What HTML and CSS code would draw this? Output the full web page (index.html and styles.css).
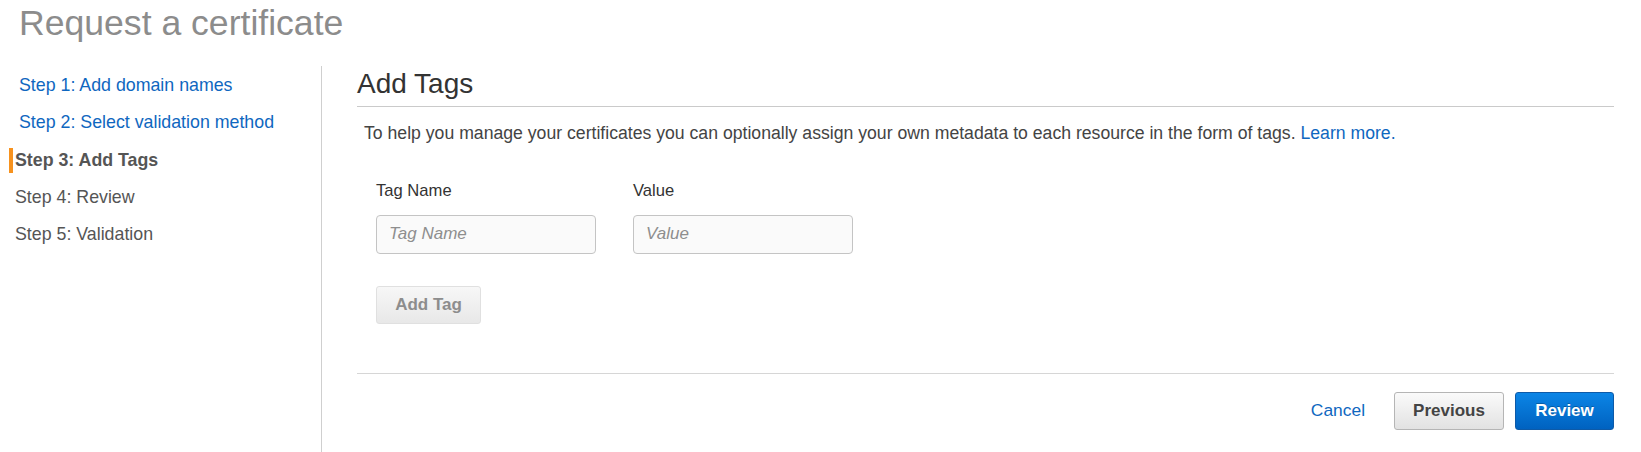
FILE: index.html
```html
<!DOCTYPE html>
<html lang="en">
<head>
<meta charset="utf-8">
<title>Request a certificate</title>
<link rel="stylesheet" href="styles.css">
</head>
<body>
<div class="page">
  <h1 class="page-title">Request a certificate</h1>
  <div class="layout">
    <nav class="steps">
      <a class="step step-link" href="#">Step 1: Add domain names</a>
      <a class="step step-link" href="#">Step 2: Select validation method</a>
      <div class="step step-active">Step 3: Add Tags</div>
      <div class="step">Step 4: Review</div>
      <div class="step">Step 5: Validation</div>
    </nav>
    <main class="content">
      <h2 class="section-title">Add Tags</h2>
      <p class="desc">To help you manage your certificates you can optionally assign your own metadata to each resource in the form of tags. <a class="link" href="#">Learn more.</a></p>
      <div class="fields">
        <div class="field">
          <label class="field-label">Tag Name</label>
          <input class="input" type="text" placeholder="Tag Name">
        </div>
        <div class="field">
          <label class="field-label">Value</label>
          <input class="input" type="text" placeholder="Value">
        </div>
      </div>
      <button class="btn btn-disabled" type="button">Add Tag</button>
      <div class="footer">
        <a class="link cancel" href="#">Cancel</a>
        <button class="btn btn-secondary" type="button">Previous</button>
        <button class="btn btn-primary" type="button">Review</button>
      </div>
    </main>
  </div>
</div>
</body>
</html>
```
FILE: styles.css
```css
* { box-sizing: border-box; }
html, body { margin: 0; padding: 0; background: #fff; }
body {
  font-family: "Liberation Sans", Arial, Helvetica, sans-serif;
  color: #444;
  height: 452px;
  overflow: hidden;
}
.page { padding: 3px 0 0 0; }
.page-title {
  margin: 0 0 23px 0;
  padding-left: 19px;
  font-size: 35.6px;
  line-height: 40px;
  font-weight: normal;
  color: #8c8c8c;
}
.layout {
  display: flex;
  height: 386px;
}
.steps {
  width: 322px;
  flex: none;
  border-right: 1px solid #cfcfcf;
  padding: 7.2px 0 0 9px;
  display: flex;
  flex-direction: column;
  gap: 12.3px;
}
.step {
  display: block;
  font-size: 17.8px;
  line-height: 25px;
  height: 25px;
  border-left: 4px solid transparent;
  padding-left: 2px;
  color: #555;
  text-decoration: none;
}
.step-link { padding-left: 6px; color: #0f67c0; }
.step-active { border-left-color: #f7921e; font-weight: bold; color: #555; }
.content {
  flex: 1;
  padding: 2px 27px 0 35px;
}
.section-title {
  margin: 0;
  font-size: 28px;
  line-height: 32px;
  font-weight: normal;
  color: #333;
  padding-bottom: 6px;
  border-bottom: 1px solid #cacaca;
}
.desc {
  margin: 15px 0 0 7px;
  font-size: 17.65px;
  line-height: 22px;
  color: #444;
}
.link { color: #0f67c0; text-decoration: none; }
.fields {
  display: flex;
  gap: 37px;
  margin: 37.4px 0 0 19px;
}
.field { display: flex; flex-direction: column; width: 220px; }
.field-label {
  font-size: 16.6px;
  line-height: 20px;
  color: #333;
  margin-bottom: 13.4px;
}
.input {
  width: 220px;
  height: 39px;
  border: 1px solid #c4c4c4;
  border-radius: 4px;
  background: #fafafa;
  padding: 0 12px;
  font-family: "Liberation Sans", Arial, sans-serif;
  font-size: 17px;
  color: #333;
  outline: none;
}
.input::placeholder { color: #8e8e8e; font-style: italic; }
.btn {
  font-family: "Liberation Sans", Arial, sans-serif;
  font-size: 17px;
  font-weight: bold;
  height: 38px;
  border-radius: 3px;
  padding: 0 18px;
  cursor: pointer;
}
.btn-disabled {
  margin: 32px 0 0 19px;
  width: 105px;
  padding: 0;
  color: #8d8d8d;
  border: 1px solid #e0e0e0;
  background: linear-gradient(#f7f7f7, #e8e8e8);
}
.footer {
  margin-top: 49px;
  border-top: 1px solid #d6d6d6;
  padding-top: 18px;
  display: flex;
  justify-content: flex-end;
  align-items: center;
}
.cancel { font-size: 17.4px; margin-right: 29px; }
.btn-secondary {
  width: 110px;
  padding: 0;
  color: #444;
  border: 1px solid #b5b5b5;
  background: linear-gradient(#fafafa, #e2e2e2);
  margin-right: 11px;
}
.btn-primary {
  width: 99px;
  padding: 0;
  color: #fff;
  border: 1px solid #0d5aa8;
  background: linear-gradient(#0b85e6, #0062c0);
  text-shadow: 0 -1px 0 rgba(0,0,0,0.25);
}
```
